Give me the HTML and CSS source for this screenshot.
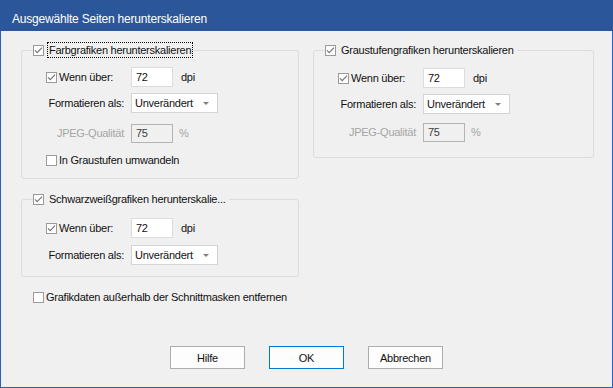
FILE: index.html
```html
<!DOCTYPE html>
<html lang="de">
<head>
<meta charset="UTF-8" />
<meta name="viewport" content="width=device-width, initial-scale=1" />
<title>Ausgewählte Seiten herunterskalieren</title>
<link rel="stylesheet" href="styles.css">
</head>
<body>
  <div class="window">
    <div class="titlebar">Ausgewählte Seiten herunterskalieren</div>

    <div class="dialog">
      <div class="columns">
        <div class="col col-left">
          <fieldset class="group group-color">
            <legend>
              <span class="check on"><svg viewBox="0 0 9 9"><path d="M1 4.3 L3.2 6.6 L8 1.6" /></svg></span>
              <span class="caption focus">Farbgrafiken herunterskalieren</span>
            </legend>
            <div class="row r1">
              <span class="opt"><span class="check on"><svg viewBox="0 0 9 9"><path d="M1 4.3 L3.2 6.6 L8 1.6" /></svg></span>Wenn über:</span>
              <span class="field">72</span><span class="unit">dpi</span>
            </div>
            <div class="row r2">
              <span class="lbl">Formatieren als:</span>
              <span class="select">Unverändert<i class="arrow"></i></span>
            </div>
            <div class="row r3 disabled">
              <span class="lbl">JPEG-Qualität</span>
              <span class="field off">75</span><span class="unit pct">%</span>
            </div>
            <div class="row r4">
              <span class="opt"><span class="check"></span>In Graustufen umwandeln</span>
            </div>
          </fieldset>

          <fieldset class="group group-bw">
            <legend>
              <span class="check on"><svg viewBox="0 0 9 9"><path d="M1 4.3 L3.2 6.6 L8 1.6" /></svg></span>
              <span class="caption">Schwarzweißgrafiken herunterskalie...</span>
            </legend>
            <div class="row r1">
              <span class="opt"><span class="check on"><svg viewBox="0 0 9 9"><path d="M1 4.3 L3.2 6.6 L8 1.6" /></svg></span>Wenn über:</span>
              <span class="field">72</span><span class="unit">dpi</span>
            </div>
            <div class="row r2">
              <span class="lbl">Formatieren als:</span>
              <span class="select">Unverändert<i class="arrow"></i></span>
            </div>
          </fieldset>

          <div class="row clip-row">
            <span class="opt"><span class="check"></span>Grafikdaten außerhalb der Schnittmasken entfernen</span>
          </div>
        </div>

        <div class="col col-right">
          <fieldset class="group group-gray">
            <legend>
              <span class="check on"><svg viewBox="0 0 9 9"><path d="M1 4.3 L3.2 6.6 L8 1.6" /></svg></span>
              <span class="caption">Graustufengrafiken herunterskalieren</span>
            </legend>
            <div class="row r1">
              <span class="opt"><span class="check on"><svg viewBox="0 0 9 9"><path d="M1 4.3 L3.2 6.6 L8 1.6" /></svg></span>Wenn über:</span>
              <span class="field">72</span><span class="unit">dpi</span>
            </div>
            <div class="row r2">
              <span class="lbl">Formatieren als:</span>
              <span class="select">Unverändert<i class="arrow"></i></span>
            </div>
            <div class="row r3 disabled">
              <span class="lbl">JPEG-Qualität</span>
              <span class="field off">75</span><span class="unit pct">%</span>
            </div>
          </fieldset>
        </div>
      </div>

      <div class="buttons">
        <button>Hilfe</button>
        <button class="default">OK</button>
        <button>Abbrechen</button>
      </div>
    </div>
  </div>
</body>
</html>
```

FILE: styles.css
```css
html, body {
  margin: 0;
  padding: 0;
}

body {
  font-family: "Liberation Sans", Arial, sans-serif;
  font-size: 11px;
  letter-spacing: -0.25px;
  color: #111;
  background: #f0f0f0;
}

.window {
  width: 613px;
  height: 388px;
  display: flex;
  flex-direction: column;
  box-sizing: border-box;
}

.titlebar {
  height: 31px;
  box-sizing: border-box;
  padding: 12px 12px 0;
  line-height: 15px;
  font-size: 12px;
  letter-spacing: -0.2px;
  color: #fff;
  background: #2b579a;
}

.dialog {
  flex: 1;
  display: flex;
  flex-direction: column;
  border: 1px solid #1f63c6;
  border-top: none;
  padding: 11px 0 18px 20px;
  background: #f0f0f0;
}

.columns {
  display: flex;
  gap: 14px;
}

.col-left { width: 278px; }
.col-right { width: 281px; }

/* group boxes */
.group {
  margin: 0;
  padding: 0 0 8px 24px;
  border: 1px solid #dcdcdc;
  border-radius: 3px;
  box-sizing: border-box;
  min-width: 0;
}

.group legend {
  display: flex;
  align-items: center;
  margin-left: -13px;
  padding: 0 1px 0 0;
  height: 16px;
}

.caption {
  border: 1px dotted transparent;
  padding: 0 1px;
  margin-left: 1px;
  line-height: 14px;
}

.caption.focus {
  border-color: #000;
}

.group-bw {
  margin-top: 12px;
  padding-bottom: 11px;
}

.group-gray {
  padding-bottom: 15px;
}

/* rows */
.row {
  display: flex;
  align-items: center;
  height: 20px;
  line-height: 20px;
}

.group .r1 { margin-top: 9px; }
.group .r2 { margin-top: 6px; }
.group .r3 { margin-top: 10px; }
.group .r4 { margin-top: 7px; }

.group-bw .r1 { margin-top: 11px; }
.group-bw .r2 { margin-top: 7px; }

.group-gray .r1 { margin-top: 10px; }
.group-gray .r3 { margin-top: 8px; }

.clip-row {
  margin: 10px 0 0 12px;
}

.opt {
  display: flex;
  align-items: center;
  width: 85px;
  white-space: nowrap;
}

.clip-row .opt,
.r4 .opt {
  width: auto;
}

.lbl {
  width: 78px;
  margin-right: 7px;
  text-align: right;
  white-space: nowrap;
}

.disabled .lbl,
.unit.pct {
  color: #a5a5a5;
}

/* checkboxes */
.check {
  width: 11px;
  height: 11px;
  box-sizing: border-box;
  border: 1px solid #9a9a9a;
  background: #fff;
  margin-right: 2px;
  flex-shrink: 0;
  display: flex;
}

.check svg {
  width: 9px;
  height: 9px;
}

.check path {
  fill: none;
  stroke: #777;
  stroke-width: 1.2;
}

/* inputs */
.field {
  width: 42px;
  height: 20px;
  box-sizing: border-box;
  border: 1px solid #dcdcdc;
  background: #fff;
  padding-left: 4px;
  line-height: 18px;
}

.field.off {
  height: 19px;
  border-color: #b4b4b4;
  background: #f0f0f0;
  color: #3c3c3c;
  line-height: 17px;
}

.unit {
  margin-left: 8px;
}

.unit.pct {
  margin-left: 6px;
}

.select {
  position: relative;
  width: 87px;
  height: 20px;
  box-sizing: border-box;
  border: 1px solid #d4d4d4;
  background: #fff;
  padding-left: 3px;
  line-height: 18px;
}

.arrow {
  position: absolute;
  right: 8px;
  top: 8px;
  width: 0;
  height: 0;
  border-left: 3px solid transparent;
  border-right: 3px solid transparent;
  border-top: 3px solid #808080;
}

/* buttons */
.buttons {
  margin-top: auto;
  margin-left: -20px;
  display: flex;
  justify-content: center;
  gap: 24px;
}

.buttons button {
  width: 75px;
  height: 23px;
  margin: 0;
  padding: 0;
  font-family: inherit;
  font-size: 11px;
  letter-spacing: -0.25px;
  color: #111;
  background: #fdfdfd;
  border: 1px solid #adadad;
}

.buttons button.default {
  border-color: #0078d7;
}
```
